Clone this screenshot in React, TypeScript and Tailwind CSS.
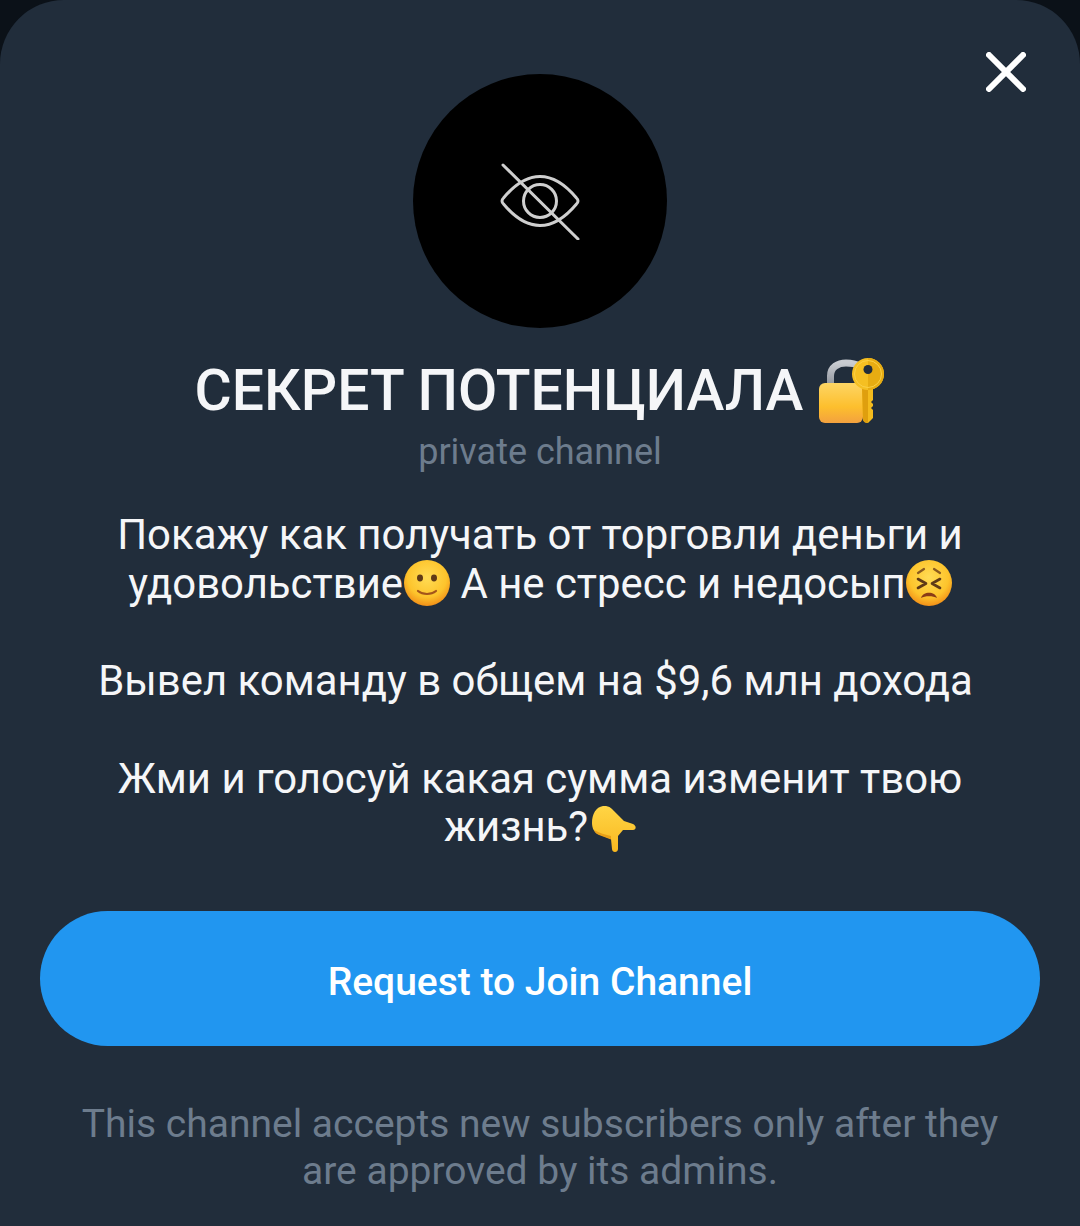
const LockKey = () => (
  <svg viewBox="0 0 67 66" className="inline-block w-[67px] h-[66px] ml-[15px]">
    <defs>
      <linearGradient id="lockBody" x1="0" y1="0" x2="0" y2="1">
        <stop offset="0" stopColor="#fdd564" />
        <stop offset="0.6" stopColor="#fdbf2d" />
        <stop offset="1" stopColor="#f3a13f" />
      </linearGradient>
      <linearGradient id="shackle" x1="0" y1="0" x2="0" y2="1">
        <stop offset="0" stopColor="#c9ccd1" />
        <stop offset="1" stopColor="#8f949c" />
      </linearGradient>
    </defs>
    <path d="M12.500 27V18C12.500 9 20 5 28 5C34 5 38 6 41 8" fill="none" stroke="url(#shackle)" strokeWidth="7" />
    <rect x="1" y="25" width="44" height="40" rx="6" fill="url(#lockBody)" />
    {/* key */}
    <path d="M44 28H55V42L53 44L55 46V48L53 50L55 52V60L50 65C47 65 46 64 45 62Z" fill="#f4bb1d" />
    <path d="M50 28H44L45 62C46 64 47 65 50 65Z" fill="#df9f0e" />
    <circle cx="50" cy="16" r="16" fill="#f5bf22" />
    <path d="M50 0A16 16 0 0 1 50 32Z" fill="#e7ac12" />
    <circle cx="50" cy="16" r="13.500" fill="none" stroke="#fad047" strokeWidth="1" />
    <circle cx="50" cy="11.500" r="4.500" fill="#212d3b" />
  </svg>
);

const FaceBase = ({ id }: { id: string }) => (
  <>
    <defs>
      <radialGradient id={id} cx="0.5" cy="0.38" r="0.62">
        <stop offset="0" stopColor="#ffdc55" />
        <stop offset="0.68" stopColor="#fdc42c" />
        <stop offset="1" stopColor="#f29018" />
      </radialGradient>
    </defs>
    <circle cx="23" cy="23" r="23" fill={`url(#${id})`} />
  </>
);

const SmileEmoji = () => (
  <svg viewBox="0 0 46 46" className="inline-block w-[46px] h-[46px] align-[-8px] ml-[1px]">
    <FaceBase id="faceSmile" />
    <ellipse cx="16" cy="18" rx="3" ry="3.400" fill="#5f3a17" />
    <ellipse cx="30" cy="18" rx="3" ry="3.400" fill="#5f3a17" />
    <path d="M14 31C19 35 27 35 32 31" fill="none" stroke="#a3541a" strokeWidth="2.200" strokeLinecap="round" />
  </svg>
);

const TiredEmoji = () => (
  <svg viewBox="0 0 46 46" className="inline-block w-[46px] h-[46px] align-[-8px]">
    <FaceBase id="faceTired" />
    <path d="M12 19L20 23.500L12 28M34 19L26 23.500L34 28" fill="none" stroke="#5f3a17" strokeWidth="2.600" strokeLinecap="round" strokeLinejoin="round" />
    <path d="M12 13L18 9M34 13L28 9" fill="none" stroke="#8a5a1e" strokeWidth="2.200" strokeLinecap="round" />
    <path d="M15 38C17 31 29 31 31 38C27 35.500 19 35.500 15 38Z" fill="#8a3b17" />
  </svg>
);

const PointDownEmoji = () => (
  <svg viewBox="0 0 44 46" className="inline-block w-[44px] h-[46px] align-[-11px] ml-[4px]">
    <defs>
      <linearGradient id="hand" x1="0" y1="0" x2="0" y2="1">
        <stop offset="0" stopColor="#ffd545" />
        <stop offset="1" stopColor="#f9b820" />
      </linearGradient>
    </defs>
    <path d="M0 17C0 8 4 1 11 0C15 -0.500 18 1 20 3L32 15L41 18C45 20 44 24 41 24H31L26 30V43C26 47 20 47 20 43L19 33L6 28C2 26 0 22 0 17Z" fill="url(#hand)" />
    <path d="M2 24C7 27 14 29 19 30V33.500L7 29C4 28 3 26 2 24Z" fill="#e9a017" />
  </svg>
);

export default function App() {
  return (
    <div className="w-[1080px] h-[1226px] bg-[#0b1118] overflow-hidden font-['Roboto',sans-serif]">
      <div className="relative h-full rounded-t-[64px] bg-[#212d3b] flex flex-col items-center pt-[74px]">
        {/* Close button */}
        <svg viewBox="0 0 40 40" className="absolute top-[52px] left-[986px] w-10 h-10">
          <path d="M3 3L37 37M37 3L3 37" stroke="#ffffff" strokeWidth="6" strokeLinecap="round" />
        </svg>

        {/* Avatar */}
        <div className="w-[254px] h-[254px] shrink-0 rounded-full bg-black flex items-center justify-center">
          <svg viewBox="0 0 80 78" className="w-20 h-[78px] fill-none stroke-[#cfcfcf] stroke-[3px]">
            <path d="M2 39C2 38 2.500 37 3.500 36C11 27 24 14.500 40 14.500C56 14.500 69 27 76.500 36C77.500 37 78 38 78 39C78 40 77.500 41 76.500 42C69 51 56 63.500 40 63.500C24 63.500 11 51 3.500 42C2.500 41 2 40 2 39Z" strokeLinejoin="round" />
            <circle cx="40" cy="39" r="16.500" />
            <path d="M3 3L78 77" strokeLinecap="round" />
          </svg>
        </div>

        {/* Title */}
        <h1 className="mt-[25px] h-[76px] flex items-center text-[57px] leading-[76px] font-medium text-[#f5f6f8] whitespace-nowrap">
          СЕКРЕТ ПОТЕНЦИАЛА
          <LockKey />
        </h1>
        <p className="mt-[2px] text-[36px] leading-[42px] text-[#6d7c8d]">private channel</p>

        {/* Description */}
        <div className="mt-[38px] w-full text-center text-[41.900px] leading-[48.500px] text-[#f5f6f8]">
          <p>Покажу как получать от торговли деньги и</p>
          <p>
            удовольствие
            <SmileEmoji /> А не стресс и недосып
            <TiredEmoji />
          </p>
          <p className="mt-[49px] pr-[9px]">Вывел команду в общем на $9,6 млн дохода</p>
          <p className="mt-[49px]">Жми и голосуй какая сумма изменит твою</p>
          <p>
            жизнь?
            <PointDownEmoji />
          </p>
        </div>

        {/* Join button */}
        <button className="mt-[59px] w-[1000px] h-[135px] shrink-0 rounded-full bg-[#2196f0] pt-[8px] text-[39px] font-medium text-white">
          Request to Join Channel
        </button>

        {/* Footer note */}
        <div className="mt-[55px] text-center text-[39px] leading-[47px] text-[#6d7c8d]">
          <p>This channel accepts new subscribers only after they</p>
          <p>are approved by its admins.</p>
        </div>
      </div>
    </div>
  );
}
